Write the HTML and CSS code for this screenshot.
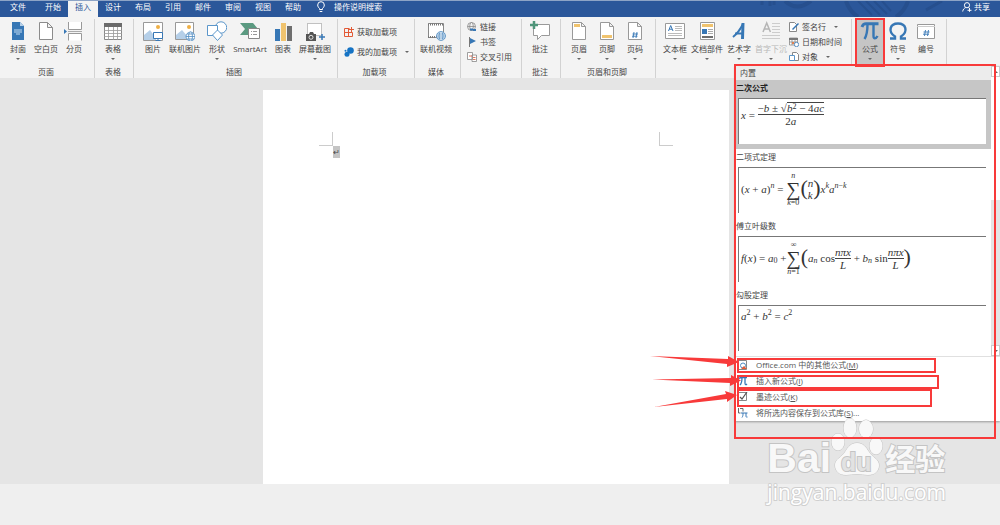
FILE: index.html
```html
<!DOCTYPE html>
<html lang="zh-CN">
<head>
<meta charset="utf-8">
<title>Word</title>
<link rel="stylesheet" href="styles.css">
</head>
<body>
<header class="titlebar">
  <svg class="pattern" width="250" height="16" viewBox="0 0 250 16" aria-hidden="true">
    <g fill="none" stroke="#264f8e">
      <path d="M12 0v4M20 0v5M24 0v4" stroke-width="3"/>
      <path d="M35 0q12 11 26 0" stroke-width="4"/>
      <path d="M96 0a32 32 0 0 0 12 16M158 0a32 32 0 0 1-12 16" stroke-width="4"/>
      <path d="M108 0l14 14M116 0l14 14M124 0l13 13M132 0l9 10" stroke-width="2"/>
      <path d="M176 9l16-9" stroke-width="3"/>
    </g>
  </svg>
  <nav class="tabs">
    <button class="tab tab-file">文件</button>
    <button class="tab">开始</button>
    <button class="tab active">插入</button>
    <button class="tab">设计</button>
    <button class="tab">布局</button>
    <button class="tab">引用</button>
    <button class="tab">邮件</button>
    <button class="tab">审阅</button>
    <button class="tab">视图</button>
    <button class="tab">帮助</button>
  </nav>
  <button class="bar-button tell-me">
    <svg width="8" height="12" viewBox="0 0 8 12" fill="none" stroke="#fff"><path d="M2.5 8.500V7.500C1.500 6.500.7 5.500.7 4a3.300 3.300 0 0 1 6.600 0c0 1.500-.8 2.500-1.800 3.500v1zM2.700 10.500h2.600" stroke-width="1"/></svg>
    操作说明搜索
  </button>
  <button class="bar-button share">
    <svg width="10" height="10" viewBox="0 0 10 10" fill="none" stroke="#fff"><circle cx="5" cy="3.200" r="2.600"/><path d="M.7 9.500C1 7.500 2 6.300 3.500 5.700M6.500 5.700l1.500 1M5.500 8.300h4M7.500 6.300v3.500"/></svg>
    共享
  </button>
</header>

<section class="ribbon" aria-label="插入">
  <div class="group">
    <div class="tools">
      <button class="big"><svg viewBox="0 0 20 20"><path d="M4 1h8l4 4v14H4z" fill="#3777b5"/><path d="M12 1l4 4h-4z" fill="#b6d0e8"/><path d="M6 9h8M6 11h8M8 13h4" stroke="#c6def2"/></svg>封面<i class="caret"></i></button>
      <button class="big"><svg viewBox="0 0 20 20" fill="#fff" stroke="#8c8c8c"><path d="M3.500 1.500h8l5 5v12h-13zM11.500 1.500v5h5"/></svg>空白页</button>
      <button class="big"><svg viewBox="0 0 20 20"><path d="M4.500 1v7.500h13V1M4.500 19.500v-7h13v7" fill="#fff" stroke="#999"/><path d="M4 10.500h14" stroke="#aaa"/><path d="M0 8l3 2.500L0 13z" fill="#3777b5"/></svg>分页</button>
    </div>
    <h2>页面</h2>
  </div>
  <div class="group roomy">
    <div class="tools">
      <button class="big"><svg viewBox="0 0 20 20"><path d="M1.500 2.500h17v16h-17z" fill="#fff" stroke="#888"/><path d="M1 2h18v4H1z" fill="#6b6b6b"/><path d="M1 9.500h18M1 12.500h18M1 15.500h18M5.500 6v13M10.500 6v13M14.500 6v13" stroke="#999" stroke-width=".8"/></svg>表格<i class="caret"></i></button>
    </div>
    <h2>表格</h2>
  </div>
  <div class="group">
    <div class="tools wide">
      <button class="big"><svg viewBox="0 0 20 20"><path d="M.5 1.500h19v18H.5z" fill="#fff" stroke="#999"/><path d="M1 19v-5l6-5 6 8v2z" fill="#b5cfe8"/><circle cx="15" cy="6" r="2" fill="#efaf45"/><path d="M10.500 11.500h9v6h-9zM15 18v1.500M12.500 19.500h5" fill="#fff" stroke="#3777b5"/></svg>图片</button>
      <button class="big"><svg viewBox="0 0 20 20"><path d="M.5 1.500h18v17H.5z" fill="#fff" stroke="#999"/><path d="M1 18v-4l6-5 6 7v2z" fill="#b5cfe8"/><circle cx="14" cy="6" r="2" fill="#efaf45"/><g fill="#fff" stroke="#4f8cc2" stroke-width=".8"><circle cx="15.500" cy="15.500" r="4.500"/><ellipse cx="15.500" cy="15.500" rx="2" ry="4.500"/><path d="M11 15.500h9M12 13h7M12 18h7"/></g></svg>联机图片</button>
      <button class="big"><svg viewBox="0 0 20 20" fill="#fff" stroke="#5b96ca"><circle cx="14" cy="6.500" r="5.700"/><path d="M.5 4.500h10v10H.5z"/><path d="M10.500 9l5 5-5 5.500-5-5.500z"/></svg>形状<i class="caret"></i></button>
      <button class="big smart"><svg viewBox="0 0 20 20"><path d="M0 2h13l5 6h-9v6H0l5-6z" fill="#5b9a81"/><path d="M8.500 7.500h11v10h-11z" fill="#fff" stroke="#888"/><path d="M11 10.500h1M11 13.500h1M13 10.500h4M13 13.500h4" stroke="#999"/></svg>SmartArt</button>
      <button class="big"><svg viewBox="0 0 20 20"><path d="M2 8h5v12H2z" fill="#3777b5"/><path d="M8 2h5v18H8z" fill="#f0c36e"/><path d="M14 5h5v15h-5z" fill="#6e6e6e"/></svg>图表</button>
      <button class="big"><svg viewBox="0 0 20 20"><path d="M2.500 2.500h14v12h-14z" fill="#fff" stroke="#888" stroke-dasharray="1 1"/><path d="M1 13h3l1-2h3l1 2h2v7H1z" fill="#555"/><circle cx="6" cy="16.300" r="2" fill="none" stroke="#fff" stroke-width=".8"/><path d="M17 13v6M14 16h6" stroke="#3777b5" stroke-width="1.500"/></svg>屏幕截图<i class="caret"></i></button>
    </div>
    <h2>插图</h2>
  </div>
  <div class="group">
    <div class="tools addins">
      <button class="small"><svg viewBox="0 0 10 10" fill="none" stroke="#e25a36"><path d="M5.500 1.500h-5v8h8v-4M.5 5.500h8M4.500 1.500v8M7.500 0v5M5 2.500h5"/></svg>获取加载项</button>
      <button class="small"><svg viewBox="0 0 10 10" fill="#1573c4"><circle cx="6.500" cy="3.500" r="3.300"/><circle cx="3" cy="7.300" r="2.500"/><circle cx="1.500" cy="3.800" r="1"/></svg>我的加载项<i class="caret"></i></button>
    </div>
    <h2>加载项</h2>
  </div>
  <div class="group">
    <div class="tools media">
      <button class="big"><svg viewBox="0 0 20 20"><path d="M2.500 2.500h15v14h-15z" fill="#fff" stroke="#888"/><path d="M2 3.500h16M2 16h16" stroke="#777" stroke-width="2" stroke-dasharray="1 1"/><g fill="#fff" stroke="#4f8cc2" stroke-width=".8"><circle cx="15" cy="15" r="4.500"/><ellipse cx="15" cy="15" rx="2" ry="4.500"/><path d="M10.500 15h9M11 13h8M11 17h8"/></g></svg>联机视频</button>
    </div>
    <h2>媒体</h2>
  </div>
  <div class="group">
    <div class="tools links">
      <button class="small"><svg viewBox="0 0 10 10" fill="none" stroke="#888" stroke-width=".8"><circle cx="4.500" cy="4.500" r="4"/><ellipse cx="4.500" cy="4.500" rx="1.800" ry="4"/><path d="M.5 4.500h8"/><path d="M3 7.500h3M6 8h3" stroke="#3777b5" stroke-width="2"/></svg>链接</button>
      <button class="small"><svg viewBox="0 0 10 10"><path d="M2.500 0v10" stroke="#777"/><path d="M3 1l6 3-6 3z" fill="#3777b5"/></svg>书签</button>
      <button class="small"><svg viewBox="0 0 10 10" fill="#fff" stroke="#888" stroke-width=".8"><path d="M.5.5h5v7h-5zM5 3h4.500v6.500H5z"/><path d="M2 4h3M6 5.500h2.500M6 7.500h2.500" stroke="#d9573a"/></svg>交叉引用</button>
    </div>
    <h2>链接</h2>
  </div>
  <div class="group roomy">
    <div class="tools">
      <button class="big"><svg viewBox="0 0 20 20"><path d="M3.500 3.500h16v11h-8l-4 4v-4h-4z" fill="#fff" stroke="#999"/><path d="M4 0v8M0 4h8" stroke="#4f957a" stroke-width="2.500"/></svg>批注</button>
    </div>
    <h2>批注</h2>
  </div>
  <div class="group roomy">
    <div class="tools">
      <button class="big"><svg viewBox="0 0 20 20"><path d="M3.500 1.500h9l4 4v13h-13zM12.500 1.500v4h4" fill="#fff" stroke="#999"/><path d="M5 3h6v3H5z" fill="#f0c36e"/></svg>页眉<i class="caret"></i></button>
      <button class="big"><svg viewBox="0 0 20 20"><path d="M3.500 1.500h9l4 4v13h-13zM12.500 1.500v4h4" fill="#fff" stroke="#999"/><path d="M5 14h10v3H5z" fill="#f0c36e"/></svg>页脚<i class="caret"></i></button>
      <button class="big"><svg viewBox="0 0 20 20"><path d="M3.500 1.500h9l4 4v13h-13zM12.500 1.500v4h4" fill="#fff" stroke="#999"/><path d="M9 11l-1 6M12 11l-1 6M7.500 13h5.500M7 15.200h5.500" stroke="#3777b5" stroke-width=".9"/></svg>页码<i class="caret"></i></button>
    </div>
    <h2>页眉和页脚</h2>
  </div>
  <div class="group">
    <div class="tools wide">
      <button class="big"><svg viewBox="0 0 20 20"><path d="M.5 2.500h19v15H.5z" fill="#fff" stroke="#999"/><path d="M3.500 10l2.200-5.500L8 10M4.300 8.200h2.800" fill="none" stroke="#3777b5"/><path d="M10 5.500h7M10 7.500h7M10 9.500h7M3 12.500h14M3 14.500h14" stroke="#aaa" stroke-width=".8"/></svg>文本框<i class="caret"></i></button>
      <button class="big"><svg viewBox="0 0 20 20"><path d="M3.500 1.500h14v17h-14z" fill="#fff" stroke="#999"/><path d="M5 3h11v3H5z" fill="#f0c36e"/><path d="M5 8h5v5H5z" fill="#3777b5"/><path d="M5 15h11v2H5z" fill="#6e6e6e"/><path d="M11 8.500h5M11 10.500h5M11 12.500h5" stroke="#aaa"/></svg>文档部件<i class="caret"></i></button>
      <button class="big"><svg viewBox="0 0 20 20" fill="none" stroke="#3777b5"><path d="M4 16C9 12 12 7 14 3" stroke-width="2"/><path d="M14 2l-.5 16" stroke-width="3"/><path d="M6 12.500h8" stroke-width="2"/></svg>艺术字<i class="caret"></i></button>
      <button class="big" disabled><svg viewBox="0 0 20 20" fill="none" stroke="#b5b5b5"><path d="M2 11l3.700-9 3.700 9M3.300 8h5" stroke-width="1.500"/><path d="M11 2.500h8M11 5.500h8M11 8.500h8M11 11.500h8M1 14.500h18M1 17.500h18" stroke="#ccc"/></svg>首字下沉<i class="caret"></i></button>
      <div class="stack">
        <button class="small"><svg viewBox="0 0 10 10"><path d="M.5.5h5l2 2v7h-7z" fill="#fff" stroke="#888"/><path d="M3 7l6-6 1 1-6 6z" fill="#3777b5"/></svg>签名行<i class="caret"></i></button>
        <button class="small"><svg viewBox="0 0 10 10"><path d="M.5 1h8v7h-8zM.5 5h8M3 3v5M6 3v5" fill="#fff" stroke="#888" stroke-width=".8"/><path d="M0 1h9v2H0z" fill="#777"/><path d="M3 5h2v2H3z" fill="#e08050"/><circle cx="7.500" cy="7.500" r="2.200" fill="#fff" stroke="#3777b5" stroke-width=".8"/></svg>日期和时间</button>
        <button class="small"><svg viewBox="0 0 10 10" fill="#fff" stroke="#888"><path d="M3.500.5h4l2 2v6h-6z"/><path d="M.5 3.500h5v5h-5z" stroke="#5b96ca"/></svg>对象<i class="caret"></i></button>
      </div>
    </div>
    <h2></h2>
  </div>
  <div class="group roomy">
    <div class="tools">
      <button class="big pressed"><svg viewBox="0 0 20 20" fill="none" stroke="#3777b5"><path d="M2 6c1-3 2-3.200 4-3.200h12.500" stroke-width="3"/><path d="M7.500 3c0 7-.5 11-3 15" stroke-width="2.400"/><path d="M13.500 3v12c0 3 2.500 3 4 0" stroke-width="2.400"/></svg>公式<i class="caret"></i></button>
      <button class="big"><svg viewBox="0 0 20 20" fill="none" stroke="#3777b5"><path d="M2 17.500h5v-2C-.5 10.500 2 2.500 10 2.500s10.500 8 3 13v2h5" stroke-width="2.400"/></svg>符号<i class="caret"></i></button>
      <button class="big"><svg viewBox="0 0 20 20"><path d="M1.500 3.500h17v14h-17z" fill="#fff" stroke="#999"/><path d="M1 5.500h18" stroke="#ccc"/><path d="M9.500 9l-1 6M12.500 9l-1 6M7.500 11h6M7 13.200h6" stroke="#3777b5" stroke-width=".9"/></svg>编号</button>
    </div>
    <h2></h2>
  </div>
</section>

<main class="workspace">
  <article class="page">
    <div class="crops"><span class="crop crop-left"></span><span class="crop crop-right"></span></div>
    <p class="selection">↵</p>
  </article>
</main>
<footer class="bottom"></footer>

<aside class="gallery">
  <div class="gallery-top">
    <div class="list">
      <h3 class="gallery-title">内置</h3>
      <section class="item selected">
        <h4>二次公式</h4>
        <div class="preview high">
          <span class="math"><em>x</em>&nbsp;=&nbsp;<span class="frac"><span>−<em>b</em> ± √<span class="root"><em>b</em><sup>2</sup> − 4<em>ac</em></span></span><span>2<em>a</em></span></span></span>
        </div>
      </section>
      <section class="item">
        <h4>二项式定理</h4>
        <div class="preview">
          <span class="math">(<em>x</em> + <em>a</em>)<sup><em>n</em></sup>&nbsp;=&nbsp;<span class="sum"><small><em>n</em></small><b>∑</b><small><em>k</em>=0</small></span><span class="paren">(</span><span class="binom"><em>n</em><em>k</em></span><span class="paren">)</span><em>x</em><sup><em>k</em></sup><em>a</em><sup><em>n</em>−<em>k</em></sup></span>
        </div>
      </section>
      <section class="item">
        <h4>傅立叶级数</h4>
        <div class="preview">
          <span class="math"><em>f</em>(<em>x</em>) = <em>a</em><sub>0</sub> +<span class="sum"><small>∞</small><b>∑</b><small><em>n</em>=1</small></span><span class="paren">(</span><em>a</em><sub><em>n</em></sub> cos<span class="frac"><em>nπx</em><em>L</em></span> + <em>b</em><sub><em>n</em></sub> sin<span class="frac"><em>nπx</em><em>L</em></span><span class="paren">)</span></span>
        </div>
      </section>
      <section class="item">
        <h4>勾股定理</h4>
        <div class="preview high">
          <span class="math"><em>a</em><sup>2</sup> + <em>b</em><sup>2</sup> = <em>c</em><sup>2</sup></span>
        </div>
      </section>
    </div>
    <div class="scroll">
      <button class="arrow" aria-label="向上"><i class="caret up"></i></button>
      <div class="track"><div class="thumb"></div></div>
      <button class="arrow" aria-label="向下"><i class="caret"></i></button>
    </div>
  </div>
  <div class="commands">
    <button class="command"><svg viewBox="0 0 10 10"><path d="M.5.5h8v9h-8z" fill="#fff" stroke="#888"/><circle cx="5" cy="5.500" r="2.500" fill="none" stroke="#4f8cc2"/><path d="M3 9l3-3 3 3z" fill="#e25a36"/></svg><span>Office.com 中的其他公式(<u>M</u>)</span><i class="caret more"></i></button>
    <button class="command"><svg viewBox="0 0 10 10" fill="none" stroke="#3777b5"><path d="M1 2.500C2 1.500 3 1.500 4 1.500h5M4 2c0 3 0 5-2 7M7 2v5c0 2 1 2 2 1" stroke-width="1.300"/></svg><span>插入新公式(<u>I</u>)</span></button>
    <button class="command"><svg viewBox="0 0 10 10"><path d="M.5.5h8v8h-8z" fill="#fff" stroke="#888"/><path d="M2 5l2 2 5-7" fill="none" stroke="#555" stroke-width="1.200"/></svg><span>墨迹公式(<u>K</u>)</span></button>
    <button class="command"><svg viewBox="0 0 10 10" fill="none"><path d="M.5 0v5h2M2 .5h3v3" stroke="#666"/><path d="M3 5h6.500M5 5c0 2 0 3-1 4.500M8 5v3c0 1 .5 1.500 1.500 1" stroke="#3777b5"/></svg><span>将所选内容保存到公式库(<u>S</u>)...</span></button>
  </div>
</aside>

<div class="watermark">
  <div class="brand">
    <span class="latin">Bai</span>
    <svg width="54" height="60" viewBox="0 0 54 60" fill="#f8f8f8" stroke="#c4c4c4">
      <ellipse cx="7" cy="25" rx="6.500" ry="8.500"/><ellipse cx="19" cy="11" rx="6.500" ry="9.500"/><ellipse cx="35" cy="12" rx="7" ry="9"/><ellipse cx="45" cy="29" rx="6.500" ry="8.500"/>
      <path d="M26 26c6 0 9 4 12 9s10 7 10 13-4 10-11 10c-4 0-7-1-11-1s-7 1-11 1C8 58 4 54 4 48s7-8 10-13 6-9 12-9z"/>
      <text x="10" y="54" class="du">du</text>
    </svg>
    <span class="han">经验</span>
  </div>
  <div class="domain">jingyan.baidu.com</div>
</div>

<svg class="marks" width="1000" height="525" viewBox="0 0 1000 525" aria-hidden="true">
  <g fill="none" stroke="#f83a3a" stroke-width="2">
    <path d="M856 19h28v47h-28zM735 65h260v373H735zM738 359h197v13H738zM738 376h200v12H738zM738 390h193v16H738z"/>
  </g>
  <g fill="#f83a3a">
    <path d="M650 356l78 3v-3l11 6-12 5v-3z"/>
    <path d="M652 379.500l79-1.500v-3l10 5.500-11 5.500v-3z"/>
    <path d="M654 407l72-13-1-3 12 4-10 7v-3z"/>
  </g>
</svg>
</body>
</html>
```

FILE: styles.css
```css
* { box-sizing: border-box; }
body {
  margin: 0;
  min-height: 100vh;
  display: flex;
  flex-direction: column;
  position: relative;
  overflow-x: hidden;
  background: #e5e5e5;
  color: #444;
  font: 8px/12px "Open Sans", "Noto Sans CJK SC", sans-serif;
}
button {
  margin: 0;
  padding: 0;
  border: 0;
  background: none;
  color: inherit;
  font: inherit;
  white-space: nowrap;
}
h2, h3, h4, p { margin: 0; font: inherit; }

.titlebar {
  position: relative;
  display: flex;
  height: 17px;
  background: #2b579a;
  border-top: 1px solid #8da4c6;
  color: #fff;
}
.pattern { position: absolute; top: 0; right: 0; }
.tabs { display: flex; }
.tab { width: 30px; height: 16px; padding-bottom: 4px; }
.tab-file { width: 38px; padding-right: 2px; }
.tab.active { background: #f3f3f3; color: #2b579a; }
.bar-button { display: flex; align-items: center; height: 12px; position: relative; }
.tell-me { margin-left: 9px; gap: 9px; }
.share { margin-left: auto; margin-right: 10px; gap: 2px; }

.ribbon { display: flex; height: 61px; padding: 2px 0 0 1px; background: #f3f3f3; }
.group {
  display: flex;
  flex-direction: column;
  justify-content: space-between;
  padding: 0 6px 0 3px;
  border-right: 1px solid #d2d2d2;
}
.roomy { padding-left: 4px; }
.group h2 { height: 12px; text-align: center; }
.tools { display: flex; }
.big {
  display: flex;
  flex-direction: column;
  align-items: center;
  width: 28px;
  height: 47px;
  padding-top: 2px;
}
.wide .big { width: 32px; }
.wide .smart { width: 34px; }
.media .big { width: 36px; }
.big svg { width: 20px; height: 20px; margin-bottom: 2px; }
.big .caret { margin-top: 3px; }
.big:disabled { color: #b8b8b8; }
.pressed { background: #c5c5c5; }
.caret {
  width: 0;
  height: 0;
  border: 2px solid transparent;
  border-top-color: #666;
  border-bottom: 0;
}
.caret.up { border-top: 0; border-bottom: 2px solid #666; }
.small { display: flex; align-items: center; gap: 3px; height: 15px; }
.small svg { flex: none; width: 10px; height: 10px; }
.small .caret { margin-left: 5px; }
.addins { flex-direction: column; width: 67px; padding: 5px 0 0 3px; gap: 5px; }
.links { flex-direction: column; width: 51px; padding-left: 3px; }
.stack { width: 58px; padding-left: 2px; }

.workspace { flex: 1; display: flex; justify-content: center; padding: 12px 8px 0 0; }
.page { width: 47%; padding: 42px 56px 0; background: #fff; }
.crops { display: flex; justify-content: space-between; }
.crop { width: 14px; height: 14px; border-bottom: 1px solid #ccc; }
.crop-left { border-right: 1px solid #ccc; }
.crop-right { border-left: 1px solid #ccc; }
.selection { width: 7px; margin-left: 14px; background: #c4c4c4; }
.bottom { height: 41px; background: #efefef; }

.gallery {
  position: absolute;
  top: 66px;
  right: 0;
  width: 265px;
  background: #fff;
  box-shadow: 0 1px 2px #999;
}
.gallery-top { display: flex; }
.list { flex: 1; }
.gallery-title { height: 14px; padding-left: 5px; background: #ececec; line-height: 14px; }
.item { height: 69px; padding: 0 5px 5px 3px; }
.item h4 { height: 18px; margin-left: -2px; line-height: 15px; }
.item.selected { background: #c6c6c6; }
.selected h4 { font-weight: 600; color: #222; }
.preview {
  display: flex;
  align-items: center;
  height: 46px;
  padding: 0 0 3px 2px;
  border-top: 1px solid #777;
  border-left: 1px solid #777;
  background: #fff;
}
.preview.high { align-items: flex-start; padding-top: 3px; }
.math {
  display: flex;
  align-items: center;
  white-space: pre;
  color: #333;
  font: 11px/12px "Liberation Serif", serif;
}
.math sup, .math sub { font-size: 8px; line-height: 8px; }
.math > sup { margin-bottom: 6px; }
.math > sub { margin-top: 6px; }
.frac { display: flex; flex-direction: column; align-items: center; }
.frac > :first-child { border-bottom: 1px solid #444; }
.root { display: inline-block; height: 11px; border-top: 1px solid #444; line-height: 11px; }
.math .root sup { line-height: 1px; vertical-align: 3px; }
.sum { display: flex; flex-direction: column; align-items: center; }
.sum small { font-size: 8px; line-height: 7px; }
.sum b { font-size: 20px; font-weight: 400; line-height: 20px; }
.binom { display: flex; flex-direction: column; }
.paren { font-size: 22px; line-height: 26px; padding-bottom: 2px; }

.scroll { width: 9px; display: flex; flex-direction: column; }
.arrow {
  display: flex;
  align-items: center;
  justify-content: center;
  height: 11px;
  border: 1px solid #ccc;
  background: #fff;
}
.track { flex: 1; background: #e5e5e5; }
.thumb { height: 46%; background: #fff; }
.commands { display: flex; flex-direction: column; border-top: 1px solid #e0e0e0; }
.command { display: flex; align-items: center; height: 16px; padding: 0 3px; gap: 8px; color: #555; }
.command svg { width: 10px; height: 10px; }
.more { margin-left: auto; transform: rotate(-90deg); }

.watermark {
  position: absolute;
  right: 54px;
  bottom: 22px;
  color: #f8f8f8;
  -webkit-text-stroke: 2px #c4c4c4;
  paint-order: stroke fill;
}
.brand { display: flex; align-items: flex-end; height: 60px; margin-bottom: 4px; }
.latin { font: 700 41px/38px "Liberation Sans", sans-serif; }
.han { font: 700 30px/40px "Noto Sans CJK SC", sans-serif; }
.du {
  font: 700 25px "Liberation Sans", sans-serif;
  fill: #e2e2e2;
  stroke: #c4c4c4;
  stroke-width: 2px;
}
.domain { color: #fff; font: 21px/22px "Open Sans", sans-serif; -webkit-text-stroke: 2px #cfcfcf; }

.marks { position: absolute; top: 0; left: 0; pointer-events: none; }
```
